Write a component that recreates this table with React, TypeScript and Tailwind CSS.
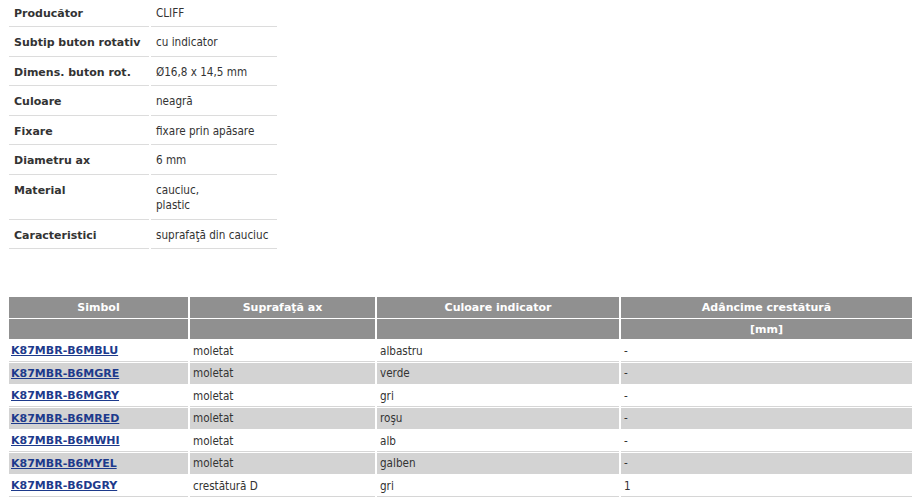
import React from "react";

const specs: { label: string; value: string[] }[] = [
  { label: "Producător", value: ["CLIFF"] },
  { label: "Subtip buton rotativ", value: ["cu indicator"] },
  { label: "Dimens. buton rot.", value: ["Ø16,8 x 14,5 mm"] },
  { label: "Culoare", value: ["neagră"] },
  { label: "Fixare", value: ["fixare prin apăsare"] },
  { label: "Diametru ax", value: ["6 mm"] },
  { label: "Material", value: ["cauciuc,", "plastic"] },
  { label: "Caracteristici", value: ["suprafaţă din cauciuc"] },
];

const rows: [string, string, string, string][] = [
  ["K87MBR-B6MBLU", "moletat", "albastru", "-"],
  ["K87MBR-B6MGRE", "moletat", "verde", "-"],
  ["K87MBR-B6MGRY", "moletat", "gri", "-"],
  ["K87MBR-B6MRED", "moletat", "roşu", "-"],
  ["K87MBR-B6MWHI", "moletat", "alb", "-"],
  ["K87MBR-B6MYEL", "moletat", "galben", "-"],
  ["K87MBR-B6DGRY", "crestătură D", "gri", "1"],
];

const bold = { fontFamily: '"DejaVu Sans", sans-serif' };

export default function App() {
  return (
    <div
      className="w-[917px] h-[501px] overflow-hidden bg-white pl-[9px] text-[11.6px] text-[#333]"
      style={{ fontFamily: '"DejaVu Sans Condensed", "DejaVu Sans", sans-serif' }}
    >
      <div className="grid grid-cols-[140px_126px] gap-x-[2px]">
        {specs.map((s, i) => (
          <React.Fragment key={s.label}>
            <div
              style={bold}
              className={`border-b border-[#dcdcdc] pl-[5px] text-[11px] font-bold leading-[15px] ${
                i === 0 ? "pt-[6px] pb-[5px]" : "pt-[8px] pb-[5.6px]"
              }`}
            >
              {s.label}
            </div>
            <div
              className={`border-b border-[#dcdcdc] pl-[5px] leading-[15px] ${
                i === 0 ? "pt-[6px] pb-[5px]" : "pt-[8px] pb-[5.6px]"
              }`}
            >
              {s.value.map((v) => (
                <div key={v}>{v}</div>
              ))}
            </div>
          </React.Fragment>
        ))}
      </div>

      <div className="mt-[48px] grid w-[903px] grid-cols-[179px_185px_242px_291px] gap-x-[2px] gap-y-[1px]">
        {["Simbol", "Suprafaţă ax", "Culoare indicator", "Adâncime crestătură"].map((h) => (
          <div
            key={h}
            style={bold}
            className="flex h-[21px] items-center justify-center bg-[#909090] pt-[2px] text-[11px] font-bold text-white"
          >
            {h}
          </div>
        ))}
        {["", "", "", "[mm]"].map((h, i) => (
          <div
            key={i}
            style={bold}
            className="flex h-[20px] items-center justify-center bg-[#909090] pt-[2px] text-[11px] font-bold text-white"
          >
            {h}
          </div>
        ))}
        {rows.map((r, ri) => {
          const bg = ri % 2 === 1 ? "bg-[#d3d3d3] border-[#d3d3d3]" : "bg-white border-[#d6d6d6]";
          return (
            <React.Fragment key={r[0]}>
              <div className={`flex h-[21.5px] items-center border-b pl-[2px] pt-[2px] ${bg}`}>
                <a href="#" style={bold} className="text-[11px] font-bold text-[#1d3a8c] underline">
                  {r[0]}
                </a>
              </div>
              <div className={`flex h-[21.5px] items-center border-b pl-[3px] pt-[2px] ${bg}`}>{r[1]}</div>
              <div className={`flex h-[21.5px] items-center border-b pl-[3px] pt-[2px] ${bg}`}>{r[2]}</div>
              <div className={`flex h-[21.5px] items-center border-b pl-[3px] pt-[2px] ${bg}`}>{r[3]}</div>
            </React.Fragment>
          );
        })}
      </div>
    </div>
  );
}
